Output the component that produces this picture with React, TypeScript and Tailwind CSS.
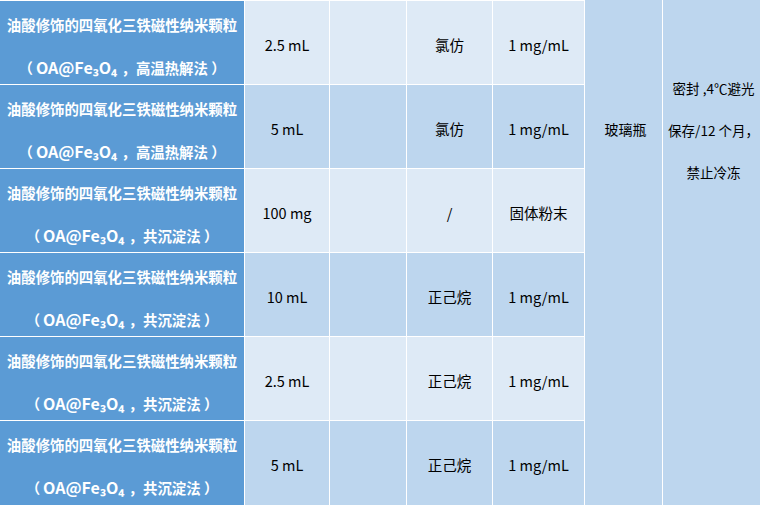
import React from "react";

const rows = [
  { m: "高温热解法", amt: "2.5 mL", sol: "氯仿", conc: "1 mg/mL" },
  { m: "高温热解法", amt: "5 mL", sol: "氯仿", conc: "1 mg/mL" },
  { m: "共沉淀法", amt: "100 mg", sol: "/", conc: "固体粉末" },
  { m: "共沉淀法", amt: "10 mL", sol: "正己烷", conc: "1 mg/mL" },
  { m: "共沉淀法", amt: "2.5 mL", sol: "正己烷", conc: "1 mg/mL" },
  { m: "共沉淀法", amt: "5 mL", sol: "正己烷", conc: "1 mg/mL" },
];

export default function App() {
  return (
    <div
      className="grid w-[760px] h-[505px] bg-white gap-[1px] grid-cols-[244px_84px_76px_85px_91px_77px_97px] grid-rows-[84px_83px_83px_83px_83px_84px] text-[14px] text-black"
      style={{ fontFamily: '"Noto Sans CJK SC", "Noto Sans", sans-serif' }}
    >
      <div className="col-start-6 row-start-1 row-span-6 bg-[#BDD6EE] flex flex-col items-center pt-[108px] leading-[42px] pl-[4px]">
        玻璃瓶
      </div>
      <div className="col-start-7 row-start-1 row-span-6 bg-[#BDD6EE] flex flex-col items-center pt-[67px] leading-[42px] text-[13.5px] pl-[4px] whitespace-nowrap">
        <span>密封 ,4℃避光</span>
        <span>保存/12 个月，</span>
        <span>禁止冷冻</span>
      </div>
      {rows.map((r, i) => {
        const bg = i % 2 === 0 ? "bg-[#DEEAF6]" : "bg-[#BDD6EE]";
        const top = i === 0 ? "border-t border-white" : "";
        const cell = `${bg} ${top} flex items-center justify-center pt-[4px] text-[14.5px]`;
        return (
          <React.Fragment key={i}>
            <div
              className={`bg-[#5B9BD5] ${top} flex flex-col items-center pt-[3px] leading-[42px] text-white font-bold text-[14.4px] whitespace-nowrap`}
            >
              <span>油酸修饰的四氧化三铁磁性纳米颗粒</span>
              <span>
                （<span className="text-[16px] pl-[3px] pr-[1px]">OA@Fe₃O₄</span> ，{r.m} ）
              </span>
            </div>
            <div className={cell}>{r.amt}</div>
            <div className={cell}></div>
            <div className={cell}>{r.sol}</div>
            <div className={cell}>{r.conc}</div>
          </React.Fragment>
        );
      })}
    </div>
  );
}
